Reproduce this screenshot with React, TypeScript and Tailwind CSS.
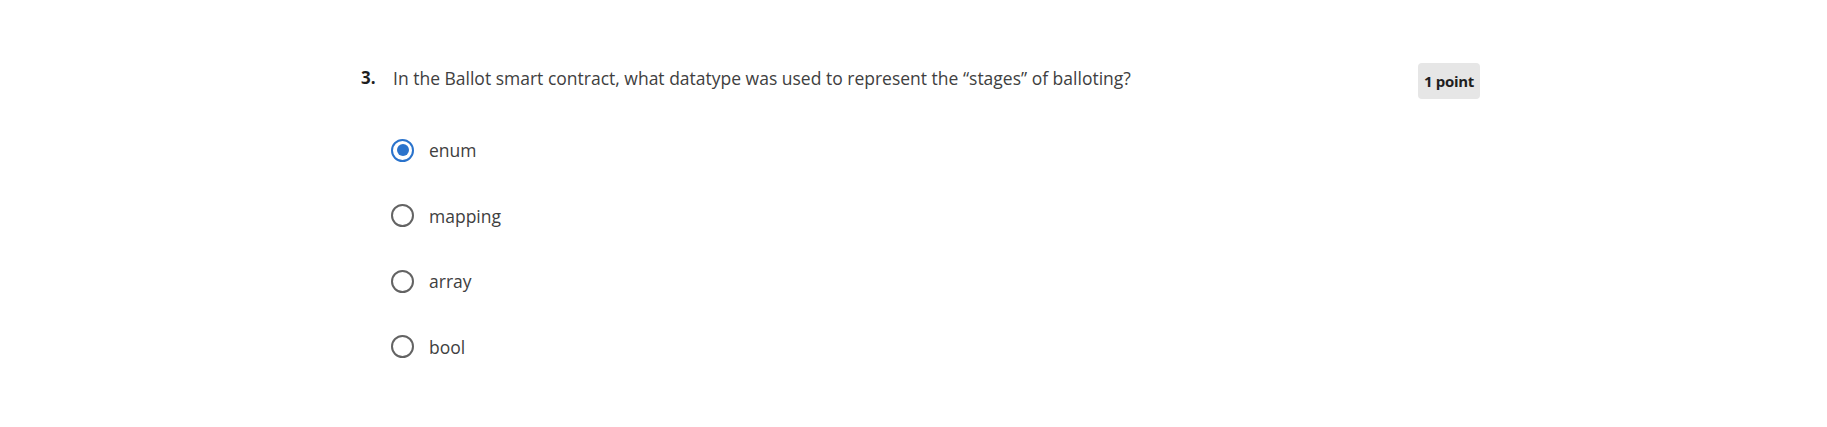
import React from 'react';

const options = ['enum', 'mapping', 'array', 'bool'];

const Radio: React.FC<{ checked?: boolean }> = ({ checked }) =>
  checked ? (
    <span className="w-[23px] h-[23px] rounded-full border-[2.5px] border-[#2a73cc] flex items-center justify-center shrink-0">
      <span className="w-[12px] h-[12px] rounded-full bg-[#2a73cc]" />
    </span>
  ) : (
    <span className="w-[23px] h-[23px] rounded-full border-[2.5px] border-[#636363] shrink-0" />
  );

export default function App() {
  const [selected, setSelected] = React.useState('enum');

  return (
    <div className="w-[1827px] h-[427px] bg-white font-['Open_Sans',sans-serif] text-[#3d3d3d]">
      <div className="pt-[66px] pl-[361px] w-[1480px]">
        <div className="flex items-start">
          <span className="w-[32px] text-[17px] leading-[24px] font-bold text-[#1f1f1f]">3.</span>
          <p className="flex-1 text-[17.5px] leading-[24px] font-normal text-[#404040]">
            In the Ballot smart contract, what datatype was used to represent the “stages” of balloting?
          </p>
          <span className="-mt-[3px] h-[36px] px-[6px] flex items-center rounded-[4px] bg-[#e6e6e6] text-[15px] font-bold text-[#1f1f1f] tracking-[-0.3px]">
            1 point
          </span>
        </div>

        <div className="mt-[39px] ml-[30px] flex flex-col gap-[41.5px]">
          {options.map((opt) => (
            <label
              key={opt}
              className="flex items-center h-[24px] gap-[15px] cursor-pointer"
              onClick={() => setSelected(opt)}
            >
              <Radio checked={selected === opt} />
              <span className="text-[17.5px] leading-[24px] font-normal text-[#404040]">{opt}</span>
            </label>
          ))}
        </div>
      </div>
    </div>
  );
}
